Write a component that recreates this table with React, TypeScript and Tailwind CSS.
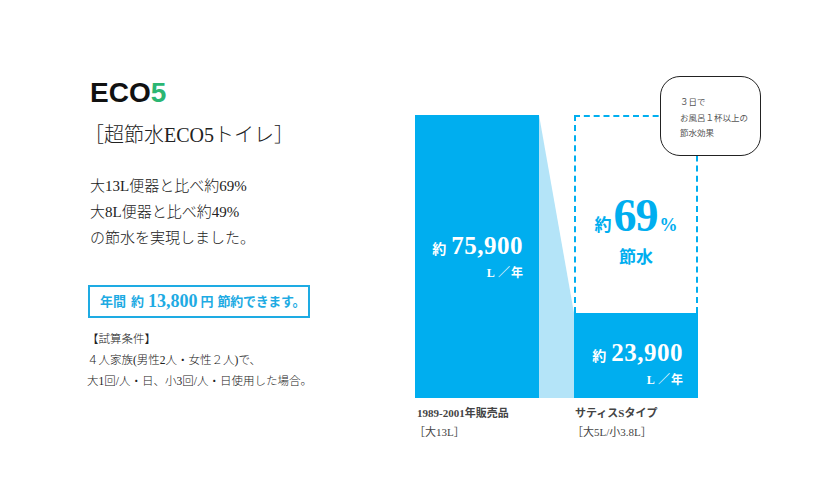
// ECO5 water-saving comparison panel: copy on the left, bar chart on the right.

const serif = "font-['Liberation_Serif','Noto_Sans_CJK_JP',serif]";

function PerYear() {
  return (
    <p className="text-[12px] font-bold leading-[16px] text-white">
      L <span className="mx-[1px]">／</span>年
    </p>
  );
}

function Amount({ value }: { value: string }) {
  return (
    <p className="flex items-baseline gap-[5px] leading-[30px] text-white">
      <span className="text-[14px] font-bold">約</span>
      <span className="text-[25px] font-bold tracking-[0.5px]">{value}</span>
    </p>
  );
}

function Chart() {
  return (
    <div className={`mt-[36px] ${serif}`}>
      <div className="relative flex h-[283px] items-end">
        {/* 1989-2001 model */}
        <div className="flex h-full w-[124px] flex-col items-end bg-[#00aeef] pr-[16px] pt-[116px]">
          <Amount value="75,900" />
          <PerYear />
        </div>

        {/* wedge between the two bars */}
        <svg width="35" height="283" viewBox="0 0 35 283" className="shrink-0">
          <polygon points="0,0 35,198 35,283 0,283" fill="#b4e4f8" />
        </svg>

        {/* Satis S type */}
        <div className="flex h-full w-[124px] flex-col">
          <div className="flex h-[198px] flex-col items-center border-2 border-b-0 border-dashed border-[#00aeef] pt-[76px] text-[#00aeef]">
            <p className="flex items-baseline leading-[46px]">
              <span className="text-[17px] font-bold">約</span>
              <span className="ml-[2px] text-[46px] font-bold tracking-[-1px]">69</span>
              <span className="ml-[2px] text-[18px] font-bold">%</span>
            </p>
            <p className="text-[17px] font-bold leading-[18px]">節水</p>
          </div>
          <div className="flex flex-1 flex-col items-end bg-[#00aeef] pr-[15px] pt-[25px]">
            <Amount value="23,900" />
            <PerYear />
          </div>
        </div>

        {/* callout bubble */}
        <div className="absolute left-[245px] top-[-39px] h-[80px] w-[101px] rounded-[20px] border-[1.5px] border-[#222] bg-white pl-[19px] pt-[17px] font-['Noto_Sans_CJK_JP',sans-serif] text-[8.5px] leading-[15.5px] text-[#555]">
          <p>３日で</p>
          <p>お風呂１杯以上の</p>
          <p>節水効果</p>
        </div>
      </div>

      <div className="mt-[6px] flex text-[11px] font-semibold leading-[19px] text-[#444]">
        <div className="w-[159px] pl-[2px]">
          <p>1989-2001年販売品</p>
          <p className="ml-[-3px] font-normal">［大13L］</p>
        </div>
        <div className="pl-[1px]">
          <p>サティスSタイプ</p>
          <p className="ml-[-3px] font-normal">［大5L/小3.8L］</p>
        </div>
      </div>
    </div>
  );
}

export default function App() {
  return (
    <div className="flex h-[500px] w-[820px] items-start bg-white pl-[90px] pt-[79px] text-[#333]">
      <div className={`flex w-[325px] flex-col ${serif}`}>
        <h1 className="font-['Liberation_Sans',sans-serif] text-[28px] font-bold leading-[28px] text-[#111]">
          ECO<span className="text-[#2bb673]">5</span>
        </h1>
        <h2 className="ml-[-6px] mt-[14px] text-[20px] font-light leading-[28px] text-[#222]">
          ［超節水ECO5トイレ］
        </h2>
        <div className="mt-[24px] text-[15px] font-light leading-[26px] text-[#222]">
          <p>大13L便器と比べ約69%</p>
          <p>大8L便器と比べ約49%</p>
          <p>の節水を実現しました。</p>
        </div>
        <div className="ml-[-2px] mt-[34px] flex h-[33px] w-[222px] items-center border-2 border-[#1eabe3] pl-[10px] font-bold text-[#1eabe3]">
          <span className="text-[13px]">年間</span>
          <span className="ml-[5px] text-[13px]">約</span>
          <span className="ml-[4px] text-[18px]">13,800</span>
          <span className="ml-[3px] text-[13px]">円</span>
          <span className="ml-[4px] text-[13px] tracking-[-0.3px]">節約できます。</span>
        </div>
        <div className="ml-[-3px] mt-[11px] text-[11.5px] font-light leading-[21px] text-[#222]">
          <p>【試算条件】</p>
          <p>４人家族(男性2人・女性２人)で、</p>
          <p>大1回/人・日、小3回/人・日使用した場合。</p>
        </div>
      </div>
      <Chart />
    </div>
  );
}
